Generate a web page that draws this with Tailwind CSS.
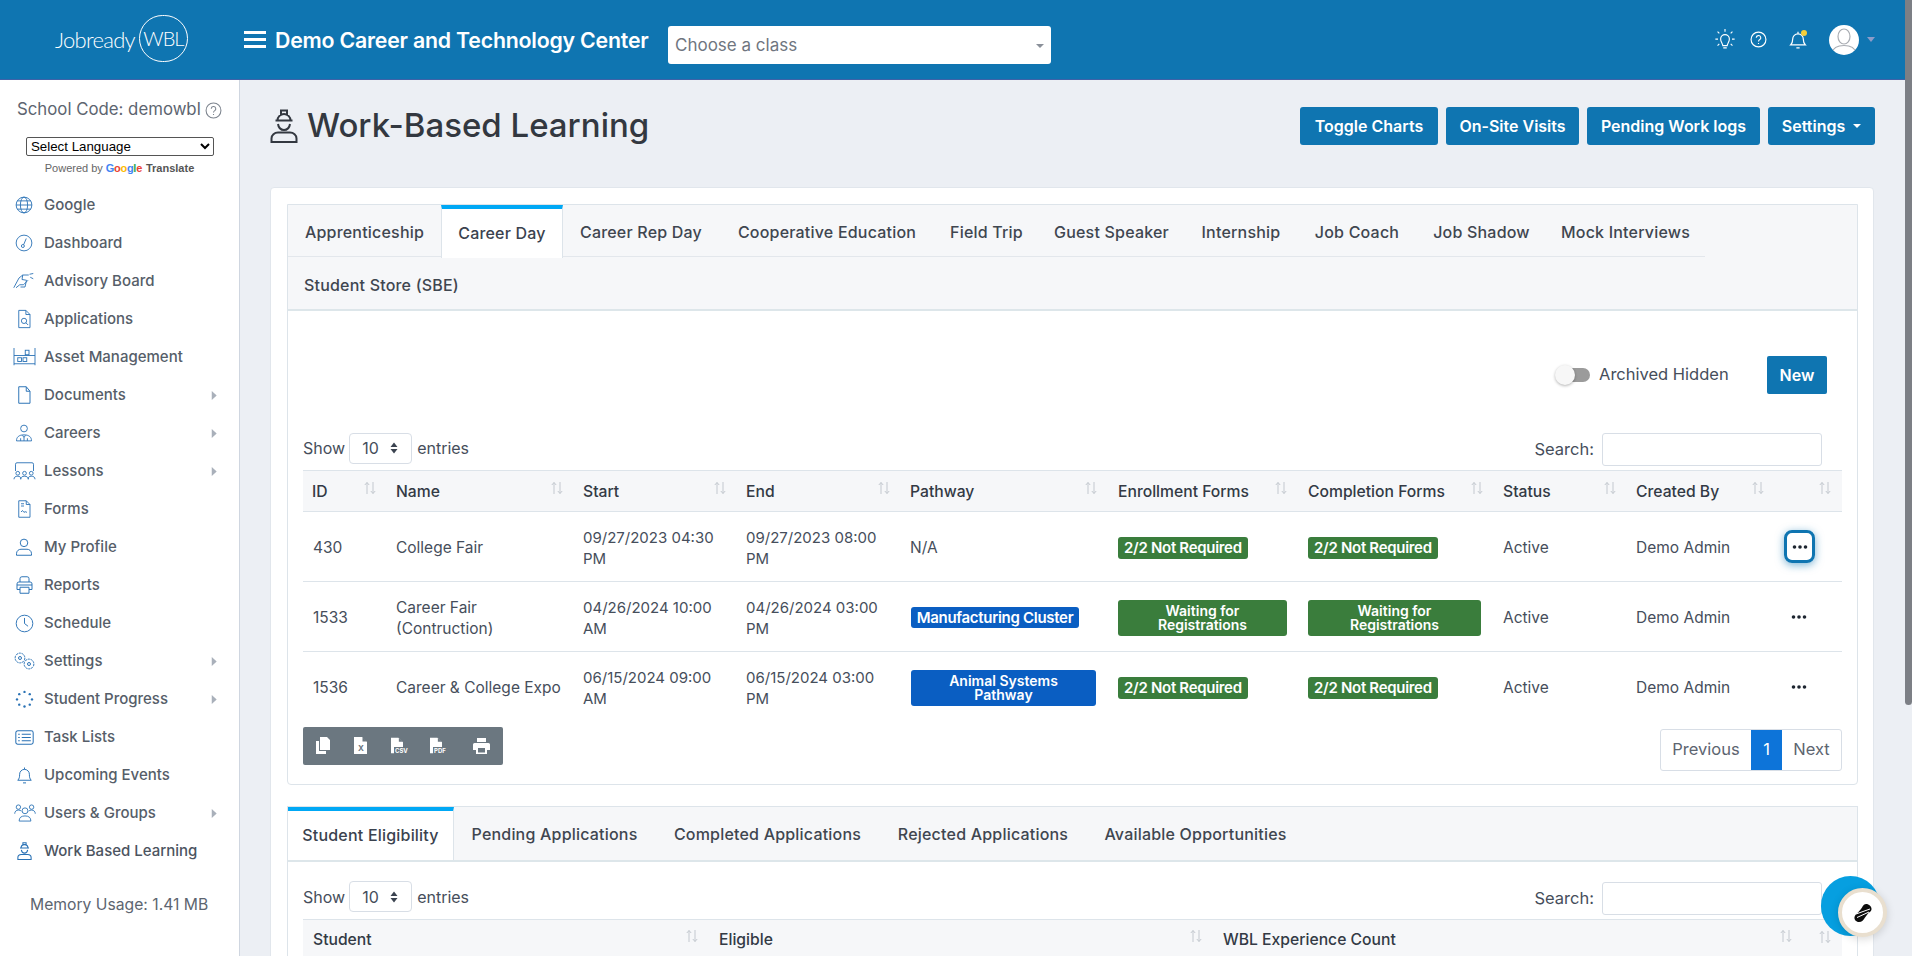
<!DOCTYPE html>
<html lang="en">

<head>
  <meta charset="UTF-8">
  <meta name="viewport" content="width=device-width, initial-scale=1.0">
  <title>Work-Based Learning</title>
  <script src="https://cdn.jsdelivr.net/npm/@tailwindcss/browser@4"></script>
</head>

<body class="relative h-screen overflow-hidden flex flex-col bg-[#eceff4] text-[#464e5b] text-[15.5px] [font-family:Inter,sans-serif]">

  <svg class="hidden">
    <symbol id="sort" viewBox="0 0 14 14">
      <path d="M4 13V1.500M1.800 4 4 1.500 6.200 4" fill="none" stroke="#c3c8cf" stroke-width="1" />
      <path d="M10 1v11.500M7.800 10l2.200 2.500 2.200-2.500" fill="none" stroke="#c3c8cf" stroke-width="1" />
    </symbol>
    <symbol id="updown" viewBox="0 0 8 12">
      <path d="M4 .5 7.500 5h-7zM4 11.500.5 7h7z" fill="#3b4350" />
    </symbol>
    <symbol id="dots" viewBox="0 0 16 4">
      <circle cx="2.500" cy="2" r="1.800" fill="#1d2530" />
      <circle cx="8" cy="2" r="1.800" fill="#1d2530" />
      <circle cx="13.500" cy="2" r="1.800" fill="#1d2530" />
    </symbol>
    <symbol id="worker" viewBox="0 0 28 34">
      <path d="M7.500 11.500a6.500 6.500 0 0 1 13 0M5.500 11.500h17M11 6V1.500h6V6M8 15c.6 4 2.800 6 6 6s5.400-2 6-6M1.500 33v-3.500c0-3.500 3-6 6.500-6h12c3.500 0 6.500 2.500 6.500 6V33z" fill="none" stroke="currentColor" stroke-width="2" />
    </symbol>
    <symbol id="caret" viewBox="0 0 6 10">
      <path d="M.5 0 6 5 .5 10z" fill="#a9b0ba" />
    </symbol>
    <symbol id="page" viewBox="0 0 13 17">
      <path d="M0 0h8l5 5v12H0zM8.500 .5V4.500h4z" fill="white" fill-rule="evenodd" />
    </symbol>
  </svg>

  <header class="h-[80px] shrink-0 flex items-center bg-[#0f75b1] border-b border-[#3f62a8] text-white">
    <div class="w-[244px] pl-[55px] flex items-center [font-family:Lato,sans-serif] font-light">
      <span class="text-[22px] tracking-[-0.7px]">Jobready</span>
      <span class="ml-[4px] w-[49px] h-[47px] -mt-[3px] rounded-full border border-white flex items-center justify-center text-[20px] tracking-[-1px]">WBL</span>
    </div>
    <div class="w-[22px] h-[17px] flex flex-col justify-between">
      <div class="h-[3px] bg-white"></div>
      <div class="h-[3px] bg-white"></div>
      <div class="h-[3px] bg-white"></div>
    </div>
    <div class="ml-[9px] mt-[3px] w-[393px] text-[21.300px] font-semibold whitespace-nowrap tracking-[-0.2px]">Demo Career and Technology Center</div>
    <div class="mt-[10px] w-[383px] h-[38px] pt-[2px] bg-white rounded-[3px] flex items-center justify-between px-[7px] text-[17px] text-[#6f7680]">
      <span>Choose a class</span>
      <span class="w-0 h-0 border-x-[4px] border-x-transparent border-t-[4px] border-t-[#8a9099]"></span>
    </div>
    <div class="ml-auto pr-[37px] flex items-center">
      <svg class="w-[22px] h-[21px]" viewBox="0 0 24 24" fill="none" stroke="white" stroke-width="1.300">
        <path d="M9.500 19c0-2.500-2.500-4-2.500-7.500a5 5 0 0 1 10 0c0 3.500-2.500 5-2.500 7.500zM10 21.500h4M12 3V0M4 11.500H1M23 11.500h-3M5.500 5 3.500 3M18.500 5l2-2M5.500 17l-2 2M18.500 17l2 2" />
      </svg>
      <svg class="ml-[14px] w-[17px] h-[17px]" viewBox="0 0 24 24" fill="none" stroke="white" stroke-width="1.600">
        <circle cx="12" cy="12" r="10.500" />
        <path d="M8.800 9.500a3.200 3.200 0 1 1 4.600 3c-1 .6-1.400 1.100-1.400 2.300M12 17v1.500" />
      </svg>
      <div class="relative ml-[22px] w-[18px] h-[20px]">
        <svg class="w-[18px] h-[20px]" viewBox="0 0 22 24" fill="none" stroke="white" stroke-width="1.500">
          <path d="M2 18c2-2 2.500-3.500 2.500-7a6.500 6.500 0 0 1 13 0c0 3.500.5 5 2.500 7zM9 21.500h4M11 4.500V2" />
        </svg>
        <span class="absolute top-0 right-0 w-[6px] h-[6px] rounded-full bg-[#f5cf3a]"></span>
      </div>
      <div class="ml-[22px] w-[30px] h-[30px] rounded-full bg-white overflow-hidden flex items-center justify-center">
        <svg class="w-[30px] h-[30px]" viewBox="0 0 30 30" fill="none" stroke="#a9adb3" stroke-width="1.200">
          <ellipse cx="15" cy="11.500" rx="6" ry="7.500" />
          <path d="M3 28c1-5 6-7.500 12-7.500S26 23 27 28" />
        </svg>
      </div>
      <span class="ml-[8px] w-0 h-0 border-x-[4px] border-x-transparent border-t-[5px] border-t-[#8c9cc9]"></span>
    </div>
  </header>

  <div class="flex-1 flex min-h-0">
    <aside class="w-[240px] shrink-0 bg-white border-r border-[#cfd6e0] pt-[18px]">
      <div class="h-[24px] pl-[17px] flex items-center text-[16.800px] text-[#5d6570] whitespace-nowrap">
        <span>School Code: demowbl</span>
        <svg class="ml-[4px] w-[17px] h-[17px]" viewBox="0 0 24 24" fill="none" stroke="#7d848e" stroke-width="1.500">
          <circle cx="12" cy="12" r="10.500" />
          <path d="M8.800 9.500a3.200 3.200 0 1 1 4.600 3c-1 .6-1.400 1.100-1.400 2.300M12 17v1.500" />
        </svg>
      </div>
      <div class="mt-[12px] px-[26px]">
        <select class="w-[188px] h-[19px] border border-[#555] rounded-[2px] bg-white text-[13.300px] text-black [font-family:'Liberation_Sans',sans-serif]">
          <option>Select Language</option>
        </select>
      </div>
      <div class="mt-[4px] h-[14px] flex items-center justify-center text-[11px] text-[#666] [font-family:'Liberation_Sans',sans-serif]">
        <span>Powered by</span>
        <span class="ml-[3px] font-bold tracking-[-0.3px]"><span class="text-[#4285f4]">G</span><span class="text-[#ea4335]">o</span><span class="text-[#fbbc05]">o</span><span class="text-[#4285f4]">g</span><span class="text-[#34a853]">l</span><span class="text-[#ea4335]">e</span></span>
        <span class="ml-[4px] font-bold text-[#555]">Translate</span>
      </div>

      <nav class="mt-[11px] text-[15px] font-medium text-[#565e69]">
        <a class="h-[38px] flex items-center">
          <svg class="ml-[15px] w-[18px] h-[18px]" viewBox="0 0 24 24" fill="none" stroke="#2a72b5" stroke-width="1.200">
            <circle cx="12" cy="12" r="10.500" />
            <ellipse cx="12" cy="12" rx="4.800" ry="10.500" />
            <path d="M1.500 12h21M3 6.500h18M3 17.500h18" />
          </svg>
          <span class="ml-[11px]">Google</span>
        </a>
        <a class="h-[38px] flex items-center">
          <svg class="ml-[15px] w-[18px] h-[18px]" viewBox="0 0 24 24" fill="none" stroke="#2a72b5" stroke-width="1.200">
            <circle cx="12" cy="12" r="10.500" />
            <circle cx="10.500" cy="16" r="2" />
            <path d="M11.500 14.300 15 6" />
          </svg>
          <span class="ml-[11px]">Dashboard</span>
        </a>
        <a class="h-[38px] flex items-center">
          <svg class="ml-[13px] w-[21px] h-[18px]" viewBox="0 0 28 24" fill="none" stroke="#2a72b5" stroke-width="1.200">
            <path d="M1 21 8 8l5-4h8M4 21l5-4h5l6-6M13 4l-1 6 6 1-2 9h-6M22 3l5-1M23 7l4 2" />
          </svg>
          <span class="ml-[10px]">Advisory Board</span>
        </a>
        <a class="h-[38px] flex items-center">
          <svg class="ml-[15px] w-[18px] h-[20px]" viewBox="0 0 24 26" fill="none" stroke="#2a72b5" stroke-width="1.200">
            <path d="M5 1.500h9.500L20 7v17.500H5zM14.500 1.500V7H20" />
            <circle cx="12" cy="15.500" r="3.500" />
            <path d="m14.500 18 3 3" />
          </svg>
          <span class="ml-[11px]">Applications</span>
        </a>
        <a class="h-[38px] flex items-center">
          <svg class="ml-[13px] w-[23px] h-[18px]" viewBox="0 0 30 24" fill="none" stroke="#2a72b5" stroke-width="1.200">
            <path d="M1 0v23M29 0v23M1 10h28M1 21h28" />
            <rect x="6" y="13" width="5" height="5" />
            <rect x="13" y="13" width="5" height="5" />
            <rect x="16" y="3" width="5" height="6" />
          </svg>
          <span class="ml-[8px]">Asset Management</span>
        </a>
        <a class="h-[38px] flex items-center pr-[22px]">
          <svg class="ml-[15px] w-[18px] h-[18px]" viewBox="0 0 24 24" fill="none" stroke="#2a72b5" stroke-width="1.300">
            <path d="M5 1h10l5 6v16H5zM15 1v6h5" />
          </svg>
          <span class="ml-[11px]">Documents</span>
          <svg class="ml-auto w-[6px] h-[9px]"><use href="#caret" /></svg>
        </a>
        <a class="h-[38px] flex items-center pr-[22px]">
          <svg class="ml-[15px] w-[18px] h-[18px]" viewBox="0 0 24 24" fill="none" stroke="#2a72b5" stroke-width="1.200">
            <circle cx="12" cy="6" r="4.500" />
            <path d="M2 22.500c0-5 3-8 10-8s10 3 10 8zM10 15l2 3 2-3M12 18v4.500M7.500 22.500V19M16.500 22.500V19" />
          </svg>
          <span class="ml-[11px]">Careers</span>
          <svg class="ml-auto w-[6px] h-[9px]"><use href="#caret" /></svg>
        </a>
        <a class="h-[38px] flex items-center pr-[22px]">
          <svg class="ml-[13px] w-[23px] h-[18px]" viewBox="0 0 30 24" fill="none" stroke="#2a72b5" stroke-width="1.200">
            <path d="M3 12V3a2 2 0 0 1 2-2h20a2 2 0 0 1 2 2v9" />
            <circle cx="6" cy="15" r="2.500" />
            <circle cx="15" cy="15" r="2.500" />
            <circle cx="24" cy="15" r="2.500" />
            <path d="M1 23c0-3 2-4 5-4s4 1 4 4M10 23c0-3 2-4 5-4s5 1 5 4M20 23c0-3 1-4 4-4s5 1 5 4" />
          </svg>
          <span class="ml-[8px]">Lessons</span>
          <svg class="ml-auto w-[6px] h-[9px]"><use href="#caret" /></svg>
        </a>
        <a class="h-[38px] flex items-center">
          <svg class="ml-[15px] w-[18px] h-[18px]" viewBox="0 0 24 24" fill="none" stroke="#2a72b5" stroke-width="1.200">
            <path d="M5 1h10l5 5v17H5zM15 1v5h5M8 5h4M8 8h4M8 16l2-2 2 2.500 1.500-1 2.500 1" />
          </svg>
          <span class="ml-[11px]">Forms</span>
        </a>
        <a class="h-[38px] flex items-center">
          <svg class="ml-[15px] w-[18px] h-[18px]" viewBox="0 0 24 24" fill="none" stroke="#2a72b5" stroke-width="1.300">
            <circle cx="12" cy="6.500" r="5" />
            <path d="M2 23v-2c0-4 3-6 6-6h8c3 0 6 2 6 6v2z" />
          </svg>
          <span class="ml-[11px]">My Profile</span>
        </a>
        <a class="h-[38px] flex items-center">
          <svg class="ml-[15px] w-[19px] h-[18px]" viewBox="0 0 24 24" fill="none" stroke="#2a72b5" stroke-width="1.300">
            <path d="M6 8V3.500A2.500 2.500 0 0 1 8.500 1h7A2.500 2.500 0 0 1 18 3.500V8M6 18H2V10.500A2.500 2.500 0 0 1 4.500 8h15a2.500 2.500 0 0 1 2.500 2.500V18h-4" />
            <path d="M6 15h12v8H6zM2 12h20" />
          </svg>
          <span class="ml-[10px]">Reports</span>
        </a>
        <a class="h-[38px] flex items-center">
          <svg class="ml-[15px] w-[19px] h-[19px]" viewBox="0 0 24 24" fill="none" stroke="#2a72b5" stroke-width="1.200">
            <circle cx="12" cy="12" r="10.500" />
            <path d="M12 5v7l4.500 3.500" />
          </svg>
          <span class="ml-[10px]">Schedule</span>
        </a>
        <a class="h-[38px] flex items-center pr-[22px]">
          <svg class="ml-[14px] w-[21px] h-[18px]" viewBox="0 0 28 24" fill="none" stroke="#2a72b5" stroke-width="1.300">
            <circle cx="8" cy="8" r="6.500" stroke-dasharray="3 1" />
            <circle cx="8" cy="8" r="2" />
            <circle cx="20" cy="16" r="6.500" stroke-dasharray="3 1" />
            <circle cx="20" cy="16" r="2" />
          </svg>
          <span class="ml-[9px]">Settings</span>
          <svg class="ml-auto w-[6px] h-[9px]"><use href="#caret" /></svg>
        </a>
        <a class="h-[38px] flex items-center pr-[22px]">
          <svg class="ml-[15px] w-[19px] h-[18px]" viewBox="0 0 24 24" fill="#2a72b5">
            <circle cx="12" cy="2.500" r="1.600" />
            <circle cx="19" cy="5.500" r="1.600" />
            <circle cx="22" cy="12.500" r="1.600" />
            <circle cx="19" cy="19.500" r="1.600" />
            <circle cx="12" cy="22" r="1.600" />
            <circle cx="5" cy="19.500" r="1.600" />
            <circle cx="2" cy="12.500" r="1.600" />
            <circle cx="5" cy="5.500" r="1.600" />
          </svg>
          <span class="ml-[10px]">Student Progress</span>
          <svg class="ml-auto w-[6px] h-[9px]"><use href="#caret" /></svg>
        </a>
        <a class="h-[38px] flex items-center">
          <svg class="ml-[15px] w-[19px] h-[15px]" viewBox="0 0 24 19" fill="none" stroke="#2a72b5" stroke-width="1.300">
            <rect x="1" y="1" width="22" height="17" rx="2.500" />
            <path d="M8.500 5.500H20M8.500 9.500H20M8.500 13.500H20M4 5.500h2M4 9.500h2M4 13.500h2" />
          </svg>
          <span class="ml-[10px]">Task Lists</span>
        </a>
        <a class="h-[38px] flex items-center">
          <svg class="ml-[16px] w-[17px] h-[18px]" viewBox="0 0 22 24" fill="none" stroke="#2a72b5" stroke-width="1.300">
            <path d="M2 19c2-2 2.500-4 2.500-8a6.500 6.500 0 0 1 13 0c0 4 .5 6 2.500 8zM9 22.500h4M11 4.500V2" />
          </svg>
          <span class="ml-[11px]">Upcoming Events</span>
        </a>
        <a class="h-[38px] flex items-center pr-[22px]">
          <svg class="ml-[14px] w-[22px] h-[18px]" viewBox="0 0 30 24" fill="none" stroke="#2a72b5" stroke-width="1.200">
            <circle cx="15" cy="9" r="4" />
            <path d="M7 23c0-5 3-7 8-7s8 2 8 7z" />
            <circle cx="6" cy="4" r="3" />
            <circle cx="24" cy="4" r="3" />
            <path d="M1 13c0-3 2-5 5-5 2 0 3 .5 4 1.500M29 13c0-3-2-5-5-5-2 0-3 .5-4 1.500" />
          </svg>
          <span class="ml-[8px]">Users &amp; Groups</span>
          <svg class="ml-auto w-[6px] h-[9px]"><use href="#caret" /></svg>
        </a>
        <a class="h-[38px] flex items-center text-[#4c545f]">
          <svg class="ml-[16px] w-[17px] h-[18px] text-[#2a72b5]"><use href="#worker" /></svg>
          <span class="ml-[11px] whitespace-nowrap">Work Based Learning</span>
        </a>
      </nav>

      <div class="mt-[24px] h-[22px] pl-[30px] flex items-center text-[15.700px] text-[#5d6570]">Memory Usage: 1.41 MB</div>
    </aside>

    <main class="flex-1 min-w-0 pl-[30px] pr-[38px] pt-[27px]">
      <div class="flex items-center justify-between h-[38px] -mr-[1px]">
        <h1 class="flex items-center text-[33px] font-medium text-[#333840] whitespace-nowrap">
          <svg class="w-[28px] h-[34px] text-[#333840]"><use href="#worker" /></svg>
          <span class="ml-[9px]">Work-Based Learning</span>
        </h1>
        <div class="flex gap-[8px] text-[16px] font-semibold text-white">
          <button class="w-[138px] h-[38px] rounded-[3px] bg-[#0f75b1]">Toggle Charts</button>
          <button class="w-[133px] h-[38px] rounded-[3px] bg-[#0f75b1]">On-Site Visits</button>
          <button class="w-[173px] h-[38px] rounded-[3px] bg-[#0f75b1]">Pending Work logs</button>
          <button class="w-[107px] h-[38px] rounded-[3px] bg-[#0f75b1] flex items-center justify-center gap-[8px]">Settings<span class="w-0 h-0 border-x-[4px] border-x-transparent border-t-[4px] border-t-white"></span></button>
        </div>
      </div>

      <section class="mt-[42px] bg-white rounded-t-[4px] border border-[#e1e6ec] pl-[16px] pr-[15px] pt-[16px]">
        <div class="border border-[#dde4ea] rounded-b-[4px]">
          <div class="flex flex-wrap bg-[#f6f7f9] border-b-2 border-[#dde6ea] text-[16px] tracking-[0.2px] font-medium text-[#3f4650]">
            <div class="w-[153px] h-[52px] pt-[2px] flex items-center justify-center border-b border-[#e3e7ec]">Apprenticeship</div>
            <div class="w-[122px] h-[53px] pb-[2px] flex items-center justify-center bg-white border-t-[4px] border-t-[#00a8f5] border-x border-x-[#dde4ea] text-[#3a424e]">Career Day</div>
            <div class="w-[156px] h-[52px] pt-[2px] flex items-center justify-center border-b border-[#e3e7ec]">Career Rep Day</div>
            <div class="w-[216px] h-[52px] pt-[2px] flex items-center justify-center border-b border-[#e3e7ec]">Cooperative Education</div>
            <div class="w-[103px] h-[52px] pt-[2px] flex items-center justify-center border-b border-[#e3e7ec]">Field Trip</div>
            <div class="w-[147px] h-[52px] pt-[2px] flex items-center justify-center border-b border-[#e3e7ec]">Guest Speaker</div>
            <div class="w-[112px] h-[52px] pt-[2px] flex items-center justify-center border-b border-[#e3e7ec]">Internship</div>
            <div class="w-[120px] h-[52px] pt-[2px] flex items-center justify-center border-b border-[#e3e7ec]">Job Coach</div>
            <div class="w-[129px] h-[52px] pt-[2px] flex items-center justify-center border-b border-[#e3e7ec]">Job Shadow</div>
            <div class="w-[159px] h-[52px] pt-[2px] flex items-center justify-center border-b border-[#e3e7ec]">Mock Interviews</div>
            <div class="w-[187px] h-[51px] pt-[2px] flex items-center justify-center">Student Store (SBE)</div>
          </div>

          <div class="px-[15px] pt-[45px] pb-[13px]">
            <div class="flex items-center justify-end pr-[15px] h-[38px]">
              <div class="-mt-[1px] relative w-[35px] h-[20px] flex items-center justify-end">
                <div class="w-[28px] h-[14px] rounded-full bg-[#9b9b9b]"></div>
                <div class="absolute left-0 top-0 w-[20px] h-[20px] rounded-full bg-[#f7f7f7] shadow-[0_1px_3px_rgba(0,0,0,0.3)]"></div>
              </div>
              <span class="-mt-[1px] ml-[9px] w-[149px] text-[16.500px] whitespace-nowrap">Archived Hidden</span>
              <button class="ml-[19px] w-[60px] h-[38px] rounded-[2px] bg-[#0f75b1] text-white text-[16px] font-semibold">New</button>
            </div>

            <div class="mt-[39px] flex items-center justify-between h-[33px] pr-[20px]">
              <div class="-mt-[3px] flex items-center text-[16px]">
                <span>Show</span>
                <div class="ml-[4px] w-[63px] h-[31px] border border-[#d8dee6] rounded-[4px] flex items-center justify-between pl-[12px] pr-[13px]">
                  <span>10</span>
                  <svg class="w-[8px] h-[12px]"><use href="#updown" /></svg>
                </div>
                <span class="ml-[5px]">entries</span>
              </div>
              <div class="flex items-center text-[16.500px]">
                <span>Search:</span>
                <input class="ml-[8px] w-[220px] h-[33px] border border-[#d8dee6] rounded-[3px]" type="text">
              </div>
            </div>

            <table class="mt-[4px] w-full table-fixed border-collapse">
              <colgroup>
                <col class="w-[84px]">
                <col class="w-[187px]">
                <col class="w-[163px]">
                <col class="w-[164px]">
                <col class="w-[207px]">
                <col class="w-[190px]">
                <col class="w-[196px]">
                <col class="w-[133px]">
                <col class="w-[148px]">
                <col>
              </colgroup>
              <thead>
                <tr class="h-[41px] bg-[#f6f7f9] border-y border-[#dde4ea] text-[15.700px] font-medium text-[#333a45] text-left">
                  <th class="font-medium pl-[9px] pr-[10px] pt-[2px]"><div class="flex items-center justify-between whitespace-nowrap">ID<svg class="-mt-[8px] w-[14px] h-[14px]"><use href="#sort" /></svg></div></th>
                  <th class="font-medium pl-[9px] pr-[10px] pt-[2px]"><div class="flex items-center justify-between whitespace-nowrap">Name<svg class="-mt-[8px] w-[14px] h-[14px]"><use href="#sort" /></svg></div></th>
                  <th class="font-medium pl-[9px] pr-[10px] pt-[2px]"><div class="flex items-center justify-between whitespace-nowrap">Start<svg class="-mt-[8px] w-[14px] h-[14px]"><use href="#sort" /></svg></div></th>
                  <th class="font-medium pl-[9px] pr-[10px] pt-[2px]"><div class="flex items-center justify-between whitespace-nowrap">End<svg class="-mt-[8px] w-[14px] h-[14px]"><use href="#sort" /></svg></div></th>
                  <th class="font-medium pl-[9px] pr-[10px] pt-[2px]"><div class="flex items-center justify-between whitespace-nowrap">Pathway<svg class="-mt-[8px] w-[14px] h-[14px]"><use href="#sort" /></svg></div></th>
                  <th class="font-medium pl-[10px] pr-[10px] pt-[2px]"><div class="flex items-center justify-between whitespace-nowrap">Enrollment Forms<svg class="-mt-[8px] w-[14px] h-[14px]"><use href="#sort" /></svg></div></th>
                  <th class="font-medium pl-[10px] pr-[10px] pt-[2px]"><div class="flex items-center justify-between whitespace-nowrap">Completion Forms<svg class="-mt-[8px] w-[14px] h-[14px]"><use href="#sort" /></svg></div></th>
                  <th class="font-medium pl-[9px] pr-[10px] pt-[2px]"><div class="flex items-center justify-between whitespace-nowrap">Status<svg class="-mt-[8px] w-[14px] h-[14px]"><use href="#sort" /></svg></div></th>
                  <th class="font-medium pl-[9px] pr-[10px] pt-[2px]"><div class="flex items-center justify-between whitespace-nowrap">Created By<svg class="-mt-[8px] w-[14px] h-[14px]"><use href="#sort" /></svg></div></th>
                  <th class="font-medium pl-[9px] pr-[10px] pt-[2px]"><div class="flex items-center justify-end"><svg class="-mt-[8px] w-[14px] h-[14px]"><use href="#sort" /></svg></div></th>
                </tr>
              </thead>
              <tbody class="leading-[21px]">
                <tr class="h-[70px] border-b border-[#dde4ea]">
                  <td class="pl-[10px] pt-[2px]">430</td>
                  <td class="pl-[9px] pt-[2px]">College Fair</td>
                  <td class="pl-[9px] pt-[2px] text-[15px]">09/27/2023 04:30 PM</td>
                  <td class="pl-[9px] pt-[2px] text-[15px]">09/27/2023 08:00 PM</td>
                  <td class="pl-[9px] pt-[2px]">N/A</td>
                  <td class="pl-[10px] pt-[2px]"><span class="inline-block px-[6px] h-[22px] leading-[22px] rounded-[3px] bg-[#3a7d3c] text-white text-[15px] font-semibold whitespace-nowrap tracking-[-0.3px]">2/2 Not Required</span></td>
                  <td class="pl-[10px] pt-[2px]"><span class="inline-block px-[6px] h-[22px] leading-[22px] rounded-[3px] bg-[#3a7d3c] text-white text-[15px] font-semibold whitespace-nowrap tracking-[-0.3px]">2/2 Not Required</span></td>
                  <td class="pl-[9px] pt-[2px]">Active</td>
                  <td class="pl-[9px] pt-[2px]">Demo Admin</td>
                  <td class="pl-[9px]">
                    <div class="w-[31px] h-[33px] rounded-[8px] border-[3px] border-[#0f75b1] shadow-[0_2px_8px_rgba(15,117,177,0.55)] flex items-center justify-center">
                      <svg class="w-[16px] h-[4px]"><use href="#dots" /></svg>
                    </div>
                  </td>
                </tr>
                <tr class="h-[70px] border-b border-[#dde4ea]">
                  <td class="pl-[10px] pt-[2px]">1533</td>
                  <td class="pl-[9px] pt-[2px]">Career Fair (Contruction)</td>
                  <td class="pl-[9px] pt-[2px] text-[15px]">04/26/2024 10:00 AM</td>
                  <td class="pl-[9px] pt-[2px] text-[15px]">04/26/2024 03:00 PM</td>
                  <td class="pl-[10px] pt-[2px]"><span class="inline-block w-[168px] h-[21px] leading-[21px] text-center rounded-[3px] bg-[#0a5ec2] text-white text-[15px] font-semibold whitespace-nowrap tracking-[-0.3px]">Manufacturing Cluster</span></td>
                  <td class="pl-[10px] pt-[2px]"><div class="w-[169px] h-[36px] pt-[4px] leading-[14px] text-center rounded-[3px] bg-[#3a7d3c] text-white text-[14px] font-semibold">Waiting for<br>Registrations</div></td>
                  <td class="pl-[10px] pt-[2px]"><div class="w-[173px] h-[36px] pt-[4px] leading-[14px] text-center rounded-[3px] bg-[#3a7d3c] text-white text-[14px] font-semibold">Waiting for<br>Registrations</div></td>
                  <td class="pl-[9px] pt-[2px]">Active</td>
                  <td class="pl-[9px] pt-[2px]">Demo Admin</td>
                  <td class="pl-[16px]"><svg class="w-[16px] h-[4px]"><use href="#dots" /></svg></td>
                </tr>
                <tr class="h-[70px]">
                  <td class="pl-[10px] pt-[2px]">1536</td>
                  <td class="pl-[9px] pt-[2px] whitespace-nowrap">Career &amp; College Expo</td>
                  <td class="pl-[9px] pt-[2px] text-[15px]">06/15/2024 09:00 AM</td>
                  <td class="pl-[9px] pt-[2px] text-[15px]">06/15/2024 03:00 PM</td>
                  <td class="pl-[10px] pt-[2px]"><div class="w-[185px] h-[36px] pt-[4px] leading-[14px] text-center rounded-[3px] bg-[#0a5ec2] text-white text-[14px] font-semibold">Animal Systems<br>Pathway</div></td>
                  <td class="pl-[10px] pt-[2px]"><span class="inline-block px-[6px] h-[22px] leading-[22px] rounded-[3px] bg-[#3a7d3c] text-white text-[15px] font-semibold whitespace-nowrap tracking-[-0.3px]">2/2 Not Required</span></td>
                  <td class="pl-[10px] pt-[2px]"><span class="inline-block px-[6px] h-[22px] leading-[22px] rounded-[3px] bg-[#3a7d3c] text-white text-[15px] font-semibold whitespace-nowrap tracking-[-0.3px]">2/2 Not Required</span></td>
                  <td class="pl-[9px] pt-[2px]">Active</td>
                  <td class="pl-[9px] pt-[2px]">Demo Admin</td>
                  <td class="pl-[16px]"><svg class="w-[16px] h-[4px]"><use href="#dots" /></svg></td>
                </tr>
              </tbody>
            </table>

            <div class="mt-[5px] flex items-start justify-between">
              <div class="w-[200px] h-[38px] rounded-[2px] bg-[#6b7780] flex items-center pl-[12px] gap-[23px]">
                <svg class="w-[16px] h-[17px]" viewBox="0 0 16 17" fill="white"><path d="M5 0h7l3 3v10H5zM1 4h3v10h7v3H1z" /></svg>
                <div class="relative w-[14px] h-[17px]">
                  <svg class="w-[13px] h-[17px]"><use href="#page" /></svg>
                  <span class="absolute left-[4px] top-[6px] text-[8px] leading-[10px] text-[#6b7780] font-bold">X</span>
                </div>
                <div class="relative w-[16px] h-[17px]">
                  <svg class="w-[12px] h-[17px]"><use href="#page" /></svg>
                  <span class="absolute left-[3px] bottom-[-1px] px-[1px] text-[6px] leading-[8px] bg-[#6b7780] text-white font-bold">CSV</span>
                </div>
                <div class="relative w-[17px] h-[17px]">
                  <svg class="w-[12px] h-[17px]"><use href="#page" /></svg>
                  <span class="absolute left-[3px] bottom-[-1px] px-[1px] text-[6px] leading-[8px] bg-[#6b7780] text-white font-bold">PDF</span>
                </div>
                <svg class="ml-[3px] w-[17px] h-[16px]" viewBox="0 0 17 16" fill="white"><path d="M4 0h9v4H4zM1.500 5h14A1.500 1.500 0 0 1 17 6.500V12h-3v4H3v-4H0V6.500A1.500 1.500 0 0 1 1.500 5zM5 10v4.500h7V10z" /></svg>
              </div>
              <div class="mt-[2px] h-[42px] flex border border-[#d8dee6] rounded-[3px] text-[16.500px] text-[#5d6570]">
                <div class="w-[90px] flex items-center justify-center">Previous</div>
                <div class="w-[31px] flex items-center justify-center bg-[#0d74d9] text-white">1</div>
                <div class="w-[59px] flex items-center justify-center">Next</div>
              </div>
            </div>
          </div>
        </div>

        <div class="mt-[21px] border border-[#dde4ea]">
          <div class="flex bg-[#f6f7f9] border-b-2 border-[#dde6ea] text-[16px] tracking-[0.2px] font-medium text-[#3f4650]">
            <div class="w-[166px] h-[53px] flex items-center justify-center bg-white border-t-[4px] border-t-[#00a8f5] border-r border-r-[#dde4ea] text-[#3a424e]">Student Eligibility</div>
            <div class="w-[201px] h-[53px] pt-[2px] flex items-center justify-center">Pending Applications</div>
            <div class="w-[225px] h-[53px] pt-[2px] flex items-center justify-center">Completed Applications</div>
            <div class="w-[206px] h-[53px] pt-[2px] flex items-center justify-center">Rejected Applications</div>
            <div class="w-[219px] h-[53px] pt-[2px] flex items-center justify-center">Available Opportunities</div>
          </div>
          <div class="px-[15px] pt-[20px]">
            <div class="flex items-center justify-between h-[33px] pr-[20px]">
              <div class="-mt-[3px] flex items-center text-[16px]">
                <span>Show</span>
                <div class="ml-[4px] w-[63px] h-[31px] border border-[#d8dee6] rounded-[4px] flex items-center justify-between pl-[12px] pr-[13px]">
                  <span>10</span>
                  <svg class="w-[8px] h-[12px]"><use href="#updown" /></svg>
                </div>
                <span class="ml-[5px]">entries</span>
              </div>
              <div class="flex items-center text-[16.500px]">
                <span>Search:</span>
                <input class="ml-[8px] w-[220px] h-[33px] border border-[#d8dee6] rounded-[3px]" type="text">
              </div>
            </div>
            <table class="mt-[4px] w-full table-fixed border-collapse">
              <colgroup>
                <col class="w-[406px]">
                <col class="w-[504px]">
                <col class="w-[590px]">
                <col>
              </colgroup>
              <thead>
                <tr class="h-[41px] bg-[#f6f7f9] border-y border-[#dde4ea] text-[15.700px] font-medium text-[#333a45] text-left">
                  <th class="font-medium px-[10px]"><div class="flex items-center justify-between">Student<svg class="-mt-[6px] w-[14px] h-[14px]"><use href="#sort" /></svg></div></th>
                  <th class="font-medium px-[10px]"><div class="flex items-center justify-between">Eligible<svg class="-mt-[6px] w-[14px] h-[14px]"><use href="#sort" /></svg></div></th>
                  <th class="font-medium px-[10px]"><div class="flex items-center justify-between">WBL Experience Count<svg class="-mt-[6px] w-[14px] h-[14px]"><use href="#sort" /></svg></div></th>
                  <th class="font-medium px-[10px]"><div class="flex items-center justify-end"><svg class="-mt-[6px] w-[14px] h-[14px]"><use href="#sort" /></svg></div></th>
                </tr>
              </thead>
            </table>
          </div>
        </div>
      </section>
    </main>
  </div>

  <!-- scrollbar thumb and chat bubble float over the page -->
  <div class="absolute right-0 top-0 w-[7px] h-[705px] rounded-b-[4px] bg-[#7c7f85]"></div>
  <div class="absolute left-[1821px] top-[876px] w-[59px] h-[60px] rounded-full bg-[#069fe0]"></div>
  <div class="absolute left-[1838px] top-[888px] w-[49px] h-[49px] rounded-full bg-white border-[4px] border-[#e9dfcf] shadow-[0_2px_8px_rgba(0,0,0,0.15)] flex items-center justify-center">
    <svg class="w-[20px] h-[20px]" viewBox="0 0 20 20">
      <path d="M13 1c3 0 6 2.500 5.500 5.500-.3 2-2 2.500-3.500 4l-3 4c-1.500 2.500-3 4.500-6 4.500-3 0-5-2.500-4.500-5 .4-2 2-3 3.500-4.500l3-3.500C9.500 4 10.500 1 13 1z" fill="#0c0c0c" />
      <path d="M3 11 17 6M4 14.500 16 9" stroke="white" stroke-width="1" />
    </svg>
  </div>
</body>

</html>
